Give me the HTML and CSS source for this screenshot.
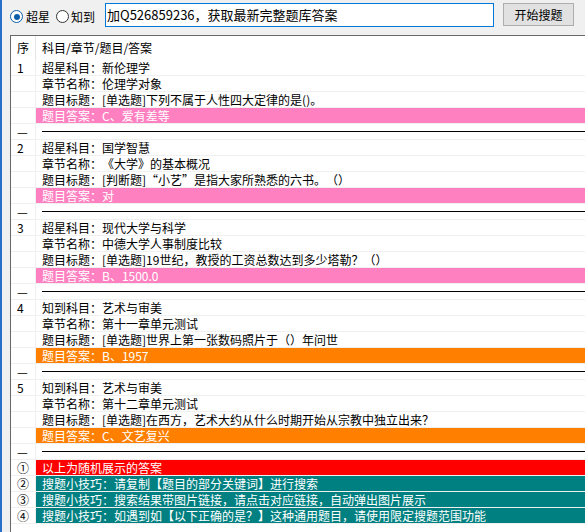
FILE: index.html
```html
<!DOCTYPE html>
<html lang="zh-CN">
<head>
<meta charset="utf-8">
<title>搜题</title>
<link rel="stylesheet" href="styles.css">
</head>
<body>
<div class="app">
  <div class="toolbar">
    <div class="opt opt-first">
      <span class="radio checked"><span class="dot"></span></span>
      <span class="opt-label">超星</span>
    </div>
    <div class="opt">
      <span class="radio"></span>
      <span class="opt-label">知到</span>
    </div>
    <div class="search">加Q526859236，获取最新完整题库答案</div>
    <div class="btn">开始搜题</div>
  </div>
  <div class="list">
    <div class="hdr"><div class="c1">序</div><div class="c2">科目/章节/题目/答案</div></div>

    <div class="row"><div class="c1">1</div><div class="c2">超星科目：新伦理学</div></div>
    <div class="row"><div class="c1"></div><div class="c2">章节名称：伦理学对象</div></div>
    <div class="row"><div class="c1"></div><div class="c2">题目标题：[单选题]下列不属于人性四大定律的是()。</div></div>
    <div class="row"><div class="c1"></div><div class="c2 pink">题目答案：C、爱有差等</div></div>
    <div class="row sep"><div class="c1">—</div><div class="c2"><div class="rule"></div></div></div>

    <div class="row"><div class="c1">2</div><div class="c2">超星科目：国学智慧</div></div>
    <div class="row"><div class="c1"></div><div class="c2">章节名称：《大学》的基本概况</div></div>
    <div class="row"><div class="c1"></div><div class="c2">题目标题：[判断题]“小艺”是指大家所熟悉的六书。（）</div></div>
    <div class="row"><div class="c1"></div><div class="c2 pink">题目答案：对</div></div>
    <div class="row sep"><div class="c1">—</div><div class="c2"><div class="rule"></div></div></div>

    <div class="row"><div class="c1">3</div><div class="c2">超星科目：现代大学与科学</div></div>
    <div class="row"><div class="c1"></div><div class="c2">章节名称：中德大学人事制度比较</div></div>
    <div class="row"><div class="c1"></div><div class="c2">题目标题：[单选题]19世纪，教授的工资总数达到多少塔勒？（）</div></div>
    <div class="row"><div class="c1"></div><div class="c2 pink">题目答案：B、1500.0</div></div>
    <div class="row sep"><div class="c1">—</div><div class="c2"><div class="rule"></div></div></div>

    <div class="row"><div class="c1">4</div><div class="c2">知到科目：艺术与审美</div></div>
    <div class="row"><div class="c1"></div><div class="c2">章节名称：第十一章单元测试</div></div>
    <div class="row"><div class="c1"></div><div class="c2">题目标题：[单选题]世界上第一张数码照片于（）年问世</div></div>
    <div class="row"><div class="c1"></div><div class="c2 orange">题目答案：B、1957</div></div>
    <div class="row sep"><div class="c1">—</div><div class="c2"><div class="rule"></div></div></div>

    <div class="row"><div class="c1">5</div><div class="c2">知到科目：艺术与审美</div></div>
    <div class="row"><div class="c1"></div><div class="c2">章节名称：第十二章单元测试</div></div>
    <div class="row"><div class="c1"></div><div class="c2">题目标题：[单选题]在西方，艺术大约从什么时期开始从宗教中独立出来？</div></div>
    <div class="row"><div class="c1"></div><div class="c2 orange">题目答案：C、文艺复兴</div></div>
    <div class="row sep"><div class="c1">—</div><div class="c2"><div class="rule"></div></div></div>

    <div class="row"><div class="c1">①</div><div class="c2 red">以上为随机展示的答案</div></div>
    <div class="row"><div class="c1">②</div><div class="c2 teal">搜题小技巧：请复制【题目的部分关键词】进行搜索</div></div>
    <div class="row"><div class="c1">③</div><div class="c2 teal">搜题小技巧：搜索结果带图片链接，请点击对应链接，自动弹出图片展示</div></div>
    <div class="row"><div class="c1">④</div><div class="c2 teal">搜题小技巧：如遇到如【以下正确的是？】这种通用题目，请使用限定搜题范围功能</div></div>
  </div>
</div>
</body>
</html>
```

FILE: styles.css
```css
html, body {
  margin: 0;
  padding: 0;
}
body {
  background: #f0f0f0;
  font-family: "Noto Sans CJK SC", "Microsoft YaHei", sans-serif;
  font-size: 12px;
  color: #000;
  width: 585px;
  height: 532px;
  overflow: hidden;
  text-spacing-trim: space-all;
}
.app {
  box-sizing: border-box;
  height: 532px;
  border-left: 2px solid #2a6fc9;
  display: flex;
  flex-direction: column;
}
.toolbar {
  height: 35px;
  flex: none;
  display: flex;
  align-items: flex-start;
  padding-left: 8px;
}
.opt {
  display: flex;
  align-items: center;
  height: 13px;
  margin-top: 10px;
  margin-right: 6px;
}
.opt + .opt {
  margin-right: 10px;
}
.radio {
  box-sizing: border-box;
  width: 13px;
  height: 13px;
  border: 1px solid #333;
  border-radius: 50%;
  background: #fff;
  display: flex;
  align-items: center;
  justify-content: center;
}
.radio.checked {
  border-color: #0f5da8;
}
.dot {
  width: 6px;
  height: 6px;
  border-radius: 50%;
  background: #0f5da8;
}
.opt-label {
  width: 24px;
  margin-left: 3px;
  line-height: 13px;
  font-size: 12px;
  white-space: nowrap;
}
.opt + .opt .opt-label {
  margin-left: 2px;
}
.search {
  box-sizing: border-box;
  width: 389px;
  height: 24px;
  margin-top: 3px;
  border: 1px solid #0078d7;
  background: #fff;
  padding-left: 1px;
  font-size: 13px;
  line-height: 22px;
  white-space: nowrap;
  overflow: hidden;
}
.btn {
  box-sizing: border-box;
  width: 71px;
  height: 23px;
  margin-top: 3px;
  margin-left: 9px;
  background: #e1e1e1;
  border: 1px solid #adadad;
  font-size: 12px;
  line-height: 21px;
  text-align: center;
}
.list {
  flex: 1;
  margin-left: 8px;
  border-top: 1px solid #696969;
  border-left: 1px solid #696969;
  background: #fff;
  overflow: hidden;
}
.hdr {
  display: flex;
  height: 24px;
  line-height: 24px;
  font-size: 12px;
}
.hdr .c1 {
  box-sizing: border-box;
  width: 25px;
  padding-left: 6px;
  border-right: 1px solid #e5e5e5;
}
.hdr .c2 {
  padding-left: 6px;
}
.row {
  box-sizing: border-box;
  display: flex;
  height: 16px;
  border-bottom: 1px solid #f0f0f0;
  line-height: 15px;
  white-space: nowrap;
}
.row .c1 {
  box-sizing: border-box;
  flex: none;
  width: 25px;
  padding-left: 6px;
  border-right: 1px solid #f0f0f0;
}
.row .c2 {
  flex: 1;
  padding-left: 6px;
  overflow: hidden;
}
.sep .c2 {
  display: flex;
  align-items: center;
}
.rule {
  flex: 1;
  height: 1px;
  background: #000;
}
.pink {
  background: #ff80c0;
  color: #fff;
}
.orange {
  background: #ff8000;
  color: #fff;
}
.red {
  background: #ff0000;
  color: #fff;
}
.teal {
  background: #008080;
  color: #fff;
}
```
